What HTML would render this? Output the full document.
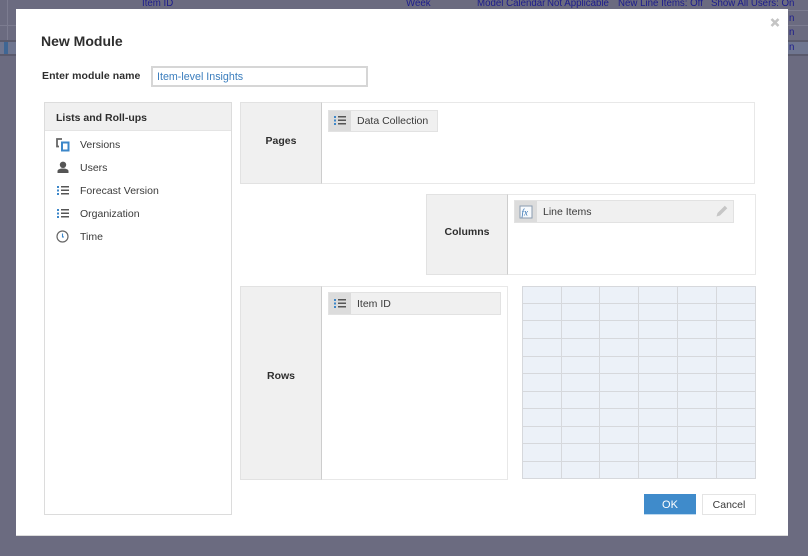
<!DOCTYPE html>
<html><head><meta charset="utf-8"><style>
*{box-sizing:border-box}
html,body{margin:0;padding:0;width:808px;height:556px;overflow:hidden;background:#6b6b80;font-family:"Liberation Sans",sans-serif}
#w{position:absolute;left:0;top:0;width:808px;height:556px;filter:blur(.35px)}
.a{position:absolute}
.bg{position:absolute;font-size:9.7px;color:#1c1c8c;white-space:nowrap;line-height:12px}
.t{position:absolute;font-size:10.5px;color:#3a3a3a;white-space:nowrap;line-height:14px;margin-top:1px}
.b{position:absolute;font-size:10.5px;font-weight:bold;color:#2e2e2e;white-space:nowrap;line-height:14px;text-align:center;margin-top:1px}
.box{position:absolute;background:#fff;border:1px solid #e8e8e8}
.lab{position:absolute;background:#f0f0f0;border:1px solid #e2e2e2;border-right:1px solid #cdcdcd}
.chip{position:absolute;background:#f0f0f0;border:1px solid #e2e2e2}
.ic{position:absolute;left:0;top:0;bottom:0;width:22px;background:#dcdcdc}
</style></head><body><div id="w">
<div class="a" style="left:0;top:40px;width:808px;height:16px;background:#6f7690;border-top:2px solid #5a5a6c;border-bottom:2px solid #5a5a6c"></div>
<div class="a" style="left:4px;top:42px;width:4px;height:12px;background:#3f6694"></div>
<div class="a" style="left:0;top:25px;width:16px;height:1px;background:#7c7c90"></div>
<div class="a" style="left:788px;top:10px;width:20px;height:1px;background:#7c7c90"></div>
<div class="a" style="left:788px;top:25px;width:20px;height:1px;background:#7c7c90"></div>
<div class="a" style="left:7px;top:0;width:1px;height:40px;background:#7c7c90"></div>
<div class="bg" style="left:142px;top:-2px">Item ID</div>
<div class="bg" style="left:406px;top:-2px">Week</div>
<div class="bg" style="left:477px;top:-2px">Model Calendar</div>
<div class="bg" style="left:547px;top:-2px">Not Applicable</div>
<div class="bg" style="left:618px;top:-2px">New Line Items: Off</div>
<div class="bg" style="left:711px;top:-2px">Show All Users: On</div>
<div class="bg" style="left:789px;top:13px">n</div>
<div class="bg" style="left:789px;top:27px">n</div>
<div class="bg" style="left:789px;top:42px">n</div>

<div class="a" style="left:16px;top:9px;width:772px;height:527px;background:#fff;border-bottom:1px solid #dcdcdc"></div>
<svg class="a" style="left:770px;top:17px" width="10" height="11" viewBox="0 0 10 11"><path d="M1.500 2L8.500 9M8.500 2L1.500 9" stroke="#c4c4c4" stroke-width="2.600"/></svg>

<div class="a" style="left:41px;top:33px;font-size:14px;font-weight:bold;color:#2e2e2e;line-height:17px;white-space:nowrap">New Module</div>
<div class="b" style="left:42px;top:68px;letter-spacing:.06px">Enter module name</div>
<div class="a" style="left:151px;top:66px;width:217px;height:21px;border:2px solid #d6d6d6;background:#fff"></div>
<div class="t" style="left:157px;top:69px;color:#3a7dbd;font-size:10.700px">Item-level Insights</div>

<div class="box" style="left:44px;top:102px;width:188px;height:413px;border-color:#dcdcdc"></div>
<div class="a" style="left:45px;top:103px;width:186px;height:28px;background:#f0f0f0;border-bottom:1px solid #e4e4e4"></div>
<div class="b" style="left:56px;top:110px">Lists and Roll-ups</div>
<svg class="a" style="left:55px;top:137px" width="16" height="16" viewBox="0 0 16 16"><path d="M7 2H2V9.500H4" fill="none" stroke="#666" stroke-width="1.800"/><rect x="7" y="5.500" width="6.500" height="8" fill="#fff" stroke="#3d87c9" stroke-width="2"/></svg>
<div class="t" style="left:80px;top:137px">Versions</div>
<svg class="a" style="left:56px;top:161px" width="14" height="14" viewBox="0 0 14 14"><circle cx="7" cy="3.800" r="3.200" fill="#555"/><path d="M1.500 12V10C1.500 8.500 4 7.500 7 7.500S12.500 8.500 12.500 10V12Z" fill="#555"/></svg>
<div class="t" style="left:80px;top:160px">Users</div>
<svg class="a" style="left:56px;top:185px" width="14" height="11" viewBox="0 0 14 11"><g fill="#3d87c9"><rect x="1" y="1" width="2" height="2"/><rect x="1" y="4.500" width="2" height="2"/><rect x="1" y="8" width="2" height="2"/></g><g fill="#555"><rect x="5" y="1" width="8" height="1.500"/><rect x="5" y="4.500" width="8" height="1.500"/><rect x="5" y="8" width="8" height="1.500"/></g></svg>
<div class="t" style="left:80px;top:183px">Forecast Version</div>
<svg class="a" style="left:56px;top:208px" width="14" height="11" viewBox="0 0 14 11"><g fill="#3d87c9"><rect x="1" y="1" width="2" height="2"/><rect x="1" y="4.500" width="2" height="2"/><rect x="1" y="8" width="2" height="2"/></g><g fill="#555"><rect x="5" y="1" width="8" height="1.500"/><rect x="5" y="4.500" width="8" height="1.500"/><rect x="5" y="8" width="8" height="1.500"/></g></svg>
<div class="t" style="left:80px;top:206px">Organization</div>
<svg class="a" style="left:56px;top:230px" width="13" height="13" viewBox="0 0 13 13"><circle cx="6.500" cy="6.500" r="5.500" fill="#fff" stroke="#666" stroke-width="1.200"/><path d="M6.500 3.500V7H8" fill="none" stroke="#3d87c9" stroke-width="1.100"/></svg>
<div class="t" style="left:80px;top:229px">Time</div>

<div class="box" style="left:240px;top:102px;width:515px;height:82px"></div>
<div class="lab" style="left:240px;top:102px;width:82px;height:82px"></div>
<div class="b" style="left:240px;top:133px;width:82px">Pages</div>
<div class="chip" style="left:328px;top:110px;width:110px;height:22px"><div class="ic"></div></div>
<svg class="a" style="left:333px;top:115px" width="14" height="11" viewBox="0 0 14 11"><g fill="#3d87c9"><rect x="1" y="1" width="2" height="2"/><rect x="1" y="4.500" width="2" height="2"/><rect x="1" y="8" width="2" height="2"/></g><g fill="#555"><rect x="5" y="1" width="8" height="1.500"/><rect x="5" y="4.500" width="8" height="1.500"/><rect x="5" y="8" width="8" height="1.500"/></g></svg>
<div class="t" style="left:357px;top:113px">Data Collection</div>

<div class="box" style="left:426px;top:194px;width:330px;height:81px"></div>
<div class="lab" style="left:426px;top:194px;width:82px;height:81px"></div>
<div class="b" style="left:426px;top:224px;width:82px">Columns</div>
<div class="chip" style="left:514px;top:200px;width:220px;height:23px"><div class="ic"></div></div>
<svg class="a" style="left:519px;top:205px" width="14" height="14" viewBox="0 0 14 14"><rect x="1" y="1" width="12" height="12" fill="#f7fafd" stroke="#8a9bb0"/><text x="2.500" y="10.500" font-family="Liberation Serif,serif" font-style="italic" font-size="9" fill="#2f6fb0">fx</text></svg>
<div class="t" style="left:543px;top:204px">Line Items</div>
<svg class="a" style="left:715px;top:204px" width="14" height="14" viewBox="0 0 14 14"><path d="M1.500 12.500L2.500 9L9.800 1.700L12.300 4.200L5 11.500Z" fill="#c6c6c6"/></svg>

<div class="box" style="left:240px;top:286px;width:268px;height:194px"></div>
<div class="lab" style="left:240px;top:286px;width:82px;height:194px"></div>
<div class="b" style="left:240px;top:368px;width:82px">Rows</div>
<div class="chip" style="left:328px;top:292px;width:173px;height:23px"><div class="ic"></div></div>
<svg class="a" style="left:333px;top:298px" width="14" height="11" viewBox="0 0 14 11"><g fill="#3d87c9"><rect x="1" y="1" width="2" height="2"/><rect x="1" y="4.500" width="2" height="2"/><rect x="1" y="8" width="2" height="2"/></g><g fill="#555"><rect x="5" y="1" width="8" height="1.500"/><rect x="5" y="4.500" width="8" height="1.500"/><rect x="5" y="8" width="8" height="1.500"/></g></svg>
<div class="t" style="left:357px;top:296px">Item ID</div>

<svg class="a" style="left:522px;top:286px" width="234" height="193" viewBox="0 0 234 193">
<rect width="234" height="193" fill="#ecf1f8"/>
<g stroke="#d6d8dc" stroke-width="1" fill="none">
<path d="M0 .5H234M0 17.500H234M0 34.500H234M0 52.500H234M0 70.500H234M0 87.500H234M0 105.500H234M0 122.500H234M0 140.500H234M0 157.500H234M0 175.500H234M0 192.500H234"/>
<path d="M.5 0V193M39.500 0V193M77.500 0V193M116.500 0V193M155.500 0V193M194.500 0V193M233.500 0V193"/>
</g></svg>

<div class="a" style="left:644px;top:494px;width:52px;height:21px;background:#3f8bcb;border-bottom:1px solid #bcd8ef;color:#fff;font-size:11px;line-height:22px;text-align:center">OK</div>
<div class="a" style="left:702px;top:494px;width:54px;height:21px;background:#fff;border:1px solid #e4e4e4;color:#3a3a3a;font-size:10.500px;line-height:20px;text-align:center">Cancel</div>
</div></body></html>
